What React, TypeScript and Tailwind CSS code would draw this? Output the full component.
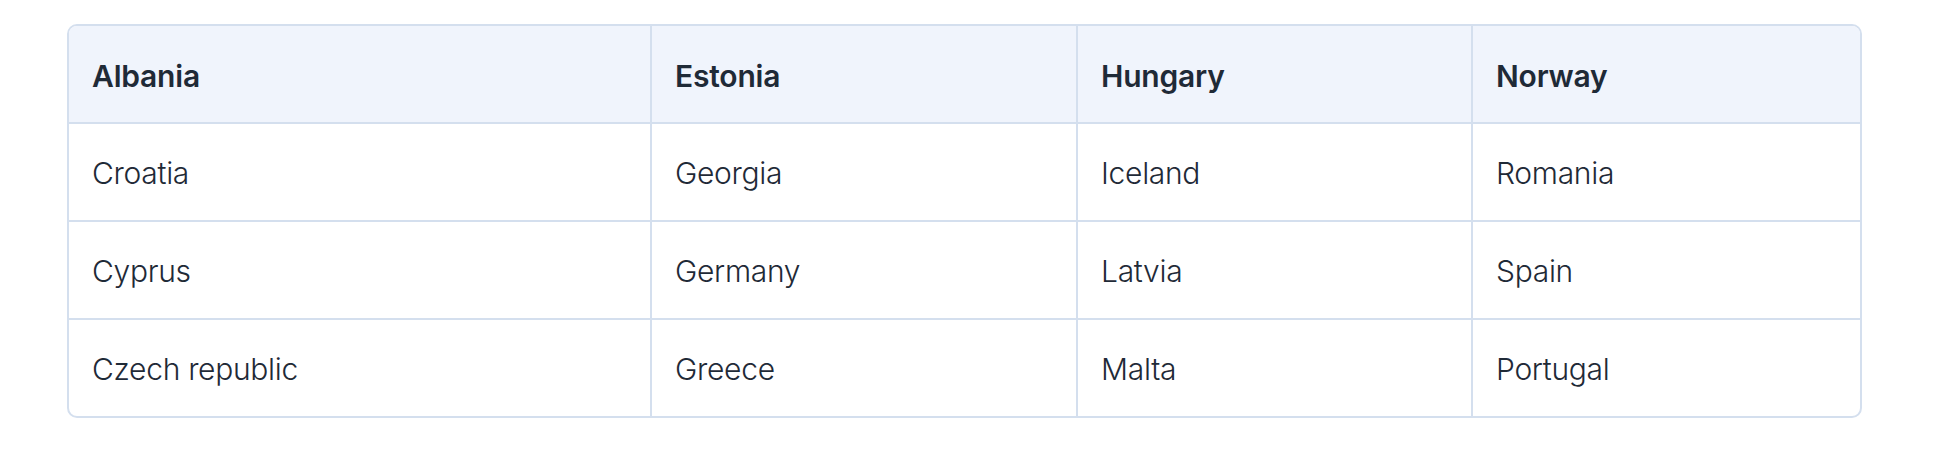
import React from 'react';

const header = ['Albania', 'Estonia', 'Hungary', 'Norway'];

const rows = [
  ['Croatia', 'Georgia', 'Iceland', 'Romania'],
  ['Cyprus', 'Germany', 'Latvia', 'Spain'],
  ['Czech republic', 'Greece', 'Malta', 'Portugal'],
];

const App: React.FC = () => {
  return (
    <div className="min-h-screen bg-white pt-[24px] pl-[67px]" style={{ fontFamily: 'Inter, "Liberation Sans", sans-serif' }}>
      <div className="w-[1795px] rounded-[10px] border-2 border-[#d4dfee] overflow-hidden text-[#1f2a37]">
        {/* header row */}
        <div className="grid grid-cols-[583px_426px_395px_1fr] bg-[#f0f4fc] border-b-2 border-[#d4dfee]">
          {header.map((h, i) => (
            <div
              key={h}
              className={`h-[96px] flex items-center pl-[23px] pt-[4px] text-[30px] font-semibold tracking-[-0.2px] ${i < 3 ? 'border-r-2 border-[#d4dfee]' : ''}`}
            >
              {h}
            </div>
          ))}
        </div>
        {rows.map((row, r) => (
          <div
            key={r}
            className={`grid grid-cols-[583px_426px_395px_1fr] ${r < rows.length - 1 ? 'border-b-2 border-[#d4dfee]' : ''}`}
          >
            {row.map((c, i) => (
              <div
                key={c}
                className={`h-[96px] flex items-center pl-[23px] pt-[3px] text-[30px] font-light tracking-[-0.3px] ${i < 3 ? 'border-r-2 border-[#d4dfee]' : ''}`}
              >
                {c}
              </div>
            ))}
          </div>
        ))}
      </div>
    </div>
  );
};

export default App;
